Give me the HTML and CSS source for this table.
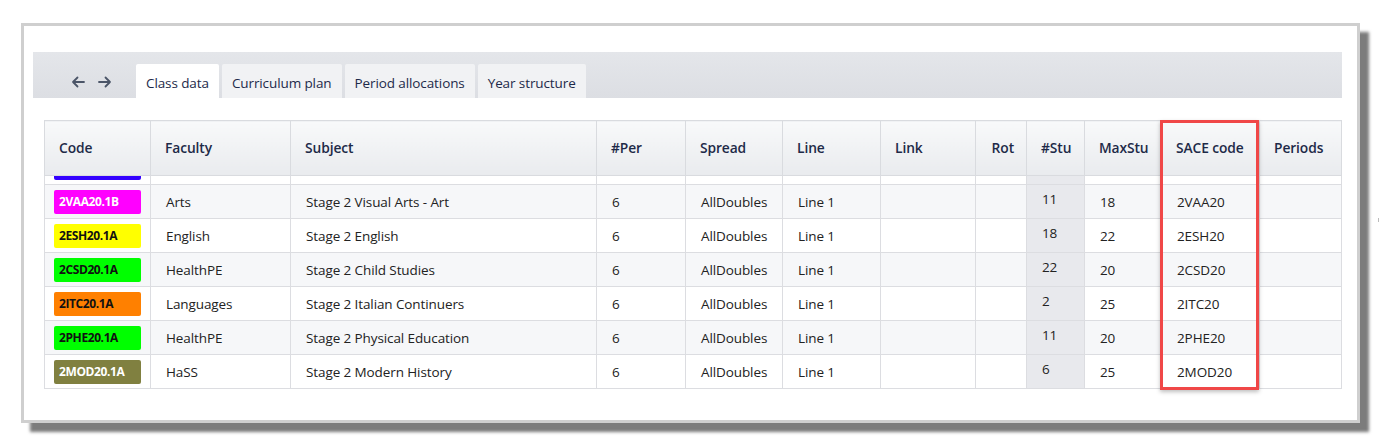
FILE: index.html
```html
<!DOCTYPE html>
<html>
<head>
<meta charset="utf-8">
<link rel="stylesheet" href="styles.css">
</head>
<body>
<div class="frame">
  <div class="tabbar">
    <div class="nav">
      <svg class="arrow" viewBox="0 0 16 16" width="16" height="16"><path d="M14 8H3M7.5 3.5L3 8l4.5 4.5" fill="none" stroke="#4b5568" stroke-width="1.8" stroke-linecap="round" stroke-linejoin="round"/></svg>
      <svg class="arrow" viewBox="0 0 16 16" width="16" height="16"><path d="M2 8h11M8.5 3.5L13 8l-4.5 4.5" fill="none" stroke="#4b5568" stroke-width="1.8" stroke-linecap="round" stroke-linejoin="round"/></svg>
    </div>
    <div class="tab active">Class data</div>
    <div class="tab">Curriculum plan</div>
    <div class="tab">Period allocations</div>
    <div class="tab">Year structure</div>
  </div>
  <div class="tablewrap">
    <table class="grid">
      <colgroup>
        <col class="c-code"><col class="c-fac"><col class="c-sub"><col class="c-per"><col class="c-spr"><col class="c-line"><col class="c-link"><col class="c-rot"><col class="c-stu"><col class="c-max"><col class="c-sace"><col class="c-pds">
      </colgroup>
      <thead>
        <tr>
          <th>Code</th><th>Faculty</th><th>Subject</th><th>#Per</th><th>Spread</th><th>Line</th><th>Link</th><th class="rot">Rot</th><th>#Stu</th><th>MaxStu</th><th>SACE code</th><th>Periods</th>
        </tr>
      </thead>
      <tbody>
        <tr class="partial">
          <td><div class="clip"><div class="inner"><span class="badge" style="background:#3300ff;color:#fff">1PCS10.1A</span></div></div></td>
          <td><div class="clip"><div class="inner">PCS</div></div></td>
          <td><div class="clip"><div class="inner">Year 10 Personal Learning</div></div></td>
          <td><div class="clip"><div class="inner">6</div></div></td>
          <td><div class="clip"><div class="inner">Anything</div></div></td>
          <td><div class="clip"><div class="inner">Group pattern</div></div></td>
          <td></td><td></td>
          <td class="stu"></td>
          <td><div class="clip"><div class="inner">25</div></div></td>
          <td></td>
          <td><div class="clip"><div class="inner">Wed p1, p2</div></div></td>
        </tr>
        <tr class="alt">
          <td><span class="badge" style="background:#ff00ff;color:#fff">2VAA20.1B</span></td>
          <td>Arts</td><td>Stage 2 Visual Arts - Art</td><td>6</td><td>AllDoubles</td><td>Line 1</td><td></td><td></td>
          <td class="stu">11</td><td>18</td><td>2VAA20</td><td></td>
        </tr>
        <tr>
          <td><span class="badge" style="background:#ffff00;color:#111">2ESH20.1A</span></td>
          <td>English</td><td>Stage 2 English</td><td>6</td><td>AllDoubles</td><td>Line 1</td><td></td><td></td>
          <td class="stu">18</td><td>22</td><td>2ESH20</td><td></td>
        </tr>
        <tr class="alt">
          <td><span class="badge" style="background:#00ff00;color:#111">2CSD20.1A</span></td>
          <td>HealthPE</td><td>Stage 2 Child Studies</td><td>6</td><td>AllDoubles</td><td>Line 1</td><td></td><td></td>
          <td class="stu">22</td><td>20</td><td>2CSD20</td><td></td>
        </tr>
        <tr>
          <td><span class="badge" style="background:#ff8000;color:#111">2ITC20.1A</span></td>
          <td>Languages</td><td>Stage 2 Italian Continuers</td><td>6</td><td>AllDoubles</td><td>Line 1</td><td></td><td></td>
          <td class="stu">2</td><td>25</td><td>2ITC20</td><td></td>
        </tr>
        <tr class="alt">
          <td><span class="badge" style="background:#00ff00;color:#111">2PHE20.1A</span></td>
          <td>HealthPE</td><td>Stage 2 Physical Education</td><td>6</td><td>AllDoubles</td><td>Line 1</td><td></td><td></td>
          <td class="stu">11</td><td>20</td><td>2PHE20</td><td></td>
        </tr>
        <tr>
          <td><span class="badge" style="background:#808040;color:#fff">2MOD20.1A</span></td>
          <td>HaSS</td><td>Stage 2 Modern History</td><td>6</td><td>AllDoubles</td><td>Line 1</td><td></td><td></td>
          <td class="stu">6</td><td>25</td><td>2MOD20</td><td></td>
        </tr>
      </tbody>
    </table>
    <div class="highlight"></div>
  </div>
</div>
<span class="edge-mark"></span>
</body>
</html>
```
FILE: styles.css
```css
html, body {
  margin: 0;
  padding: 0;
  background: #ffffff;
}
body {
  padding: 23px 0 0 21px;
  font-family: "Open Sans", "Noto Sans", "Liberation Sans", sans-serif;
  color: #222;
  position: relative;
  height: 448px;
  box-sizing: border-box;
  overflow: hidden;
}
.frame {
  width: 1339px;
  height: 400px;
  box-sizing: border-box;
  border: 3px solid #cfcfcf;
  background: #fff;
  box-shadow: 9px 9px 3px #7c7c7c;
  padding: 26px 15px 0 9px;
}
.tabbar {
  height: 46px;
  background: linear-gradient(#e4e6ea, #dcdee3);
  display: flex;
  align-items: flex-end;
}
.nav {
  width: 103px;
  height: 46px;
  display: flex;
  align-items: center;
  padding-left: 37px;
  gap: 11px;
  box-sizing: border-box;
  padding-top: 13px;
}
.arrow { display: block; }
.tab {
  height: 34px;
  box-sizing: border-box;
  padding: 3px 10px 0;
  margin-right: 3px;
  display: flex;
  align-items: center;
  font-size: 13.5px;
  color: #1d2a4a;
  background: #f1f2f4;
  border-radius: 2px 2px 0 0;
  letter-spacing: -0.1px;
}
.tab.active {
  background: #ffffff;
}
.tablewrap {
  position: relative;
  margin: 22px 0 0 11px;
  width: 1297px;
}
.grid {
  border-collapse: collapse;
  table-layout: fixed;
  width: 1297px;
  font-size: 13.5px;
  letter-spacing: -0.1px;
}
.c-code { width: 106px; }
.c-fac { width: 140px; }
.c-sub { width: 306px; }
.c-per { width: 89px; }
.c-spr { width: 97px; }
.c-line { width: 98px; }
.c-link { width: 95px; }
.c-rot { width: 51px; }
.c-stu { width: 58px; }
.c-max { width: 77px; }
.c-sace { width: 98px; }
.c-pds { width: 82px; }
.grid th {
  height: 55px;
  box-sizing: border-box;
  text-align: left;
  font-weight: 600;
  font-size: 13.8px;
  color: #1e2a48;
  padding: 0 14px 2px;
  background: linear-gradient(#f8f9fa, #e9ebee);
  border: 1px solid #d9dbdf;
  white-space: nowrap;
}
.grid th.rot { text-align: right; padding-right: 12px; }
.grid td {
  height: 34px;
  box-sizing: border-box;
  padding: 0 15px;
  border: 1px solid #dcdde1;
  white-space: nowrap;
  color: #222;
  vertical-align: middle;
}
.grid td:first-child { padding: 0 8px 0 9px; }
.grid tr.alt td { background: #f6f7f9; }
.grid td.stu {
  background: #e8e9ed;
  vertical-align: top;
  padding-top: 5px;
}
.grid tr.alt td.stu { background: #e8e9ed; }
.grid tr.partial td {
  height: 9px;
  padding-top: 0;
  padding-bottom: 0;
  vertical-align: bottom;
}
.clip {
  height: 8px;
  overflow: hidden;
  position: relative;
}
.inner {
  margin-top: -26px;
  height: 34px;
  line-height: 34px;
  color: #777;
}
.badge {
  display: inline-block;
  width: 87px;
  height: 24px;
  line-height: 24px;
  box-sizing: border-box;
  padding-left: 5px;
  border-radius: 2px;
  font-size: 12px;
  font-weight: 700;
  letter-spacing: -0.4px;
  vertical-align: middle;
}
.highlight {
  position: absolute;
  left: 1116px;
  top: 0;
  width: 99px;
  height: 270px;
  box-sizing: border-box;
  border: 3px solid #f04747;
  box-shadow: 0 2px 4px rgba(0,0,0,0.25);
  pointer-events: none;
}
.edge-mark {
  position: absolute;
  left: 1378px;
  top: 218px;
  width: 1px;
  height: 4px;
  background: #bbb;
}
```
